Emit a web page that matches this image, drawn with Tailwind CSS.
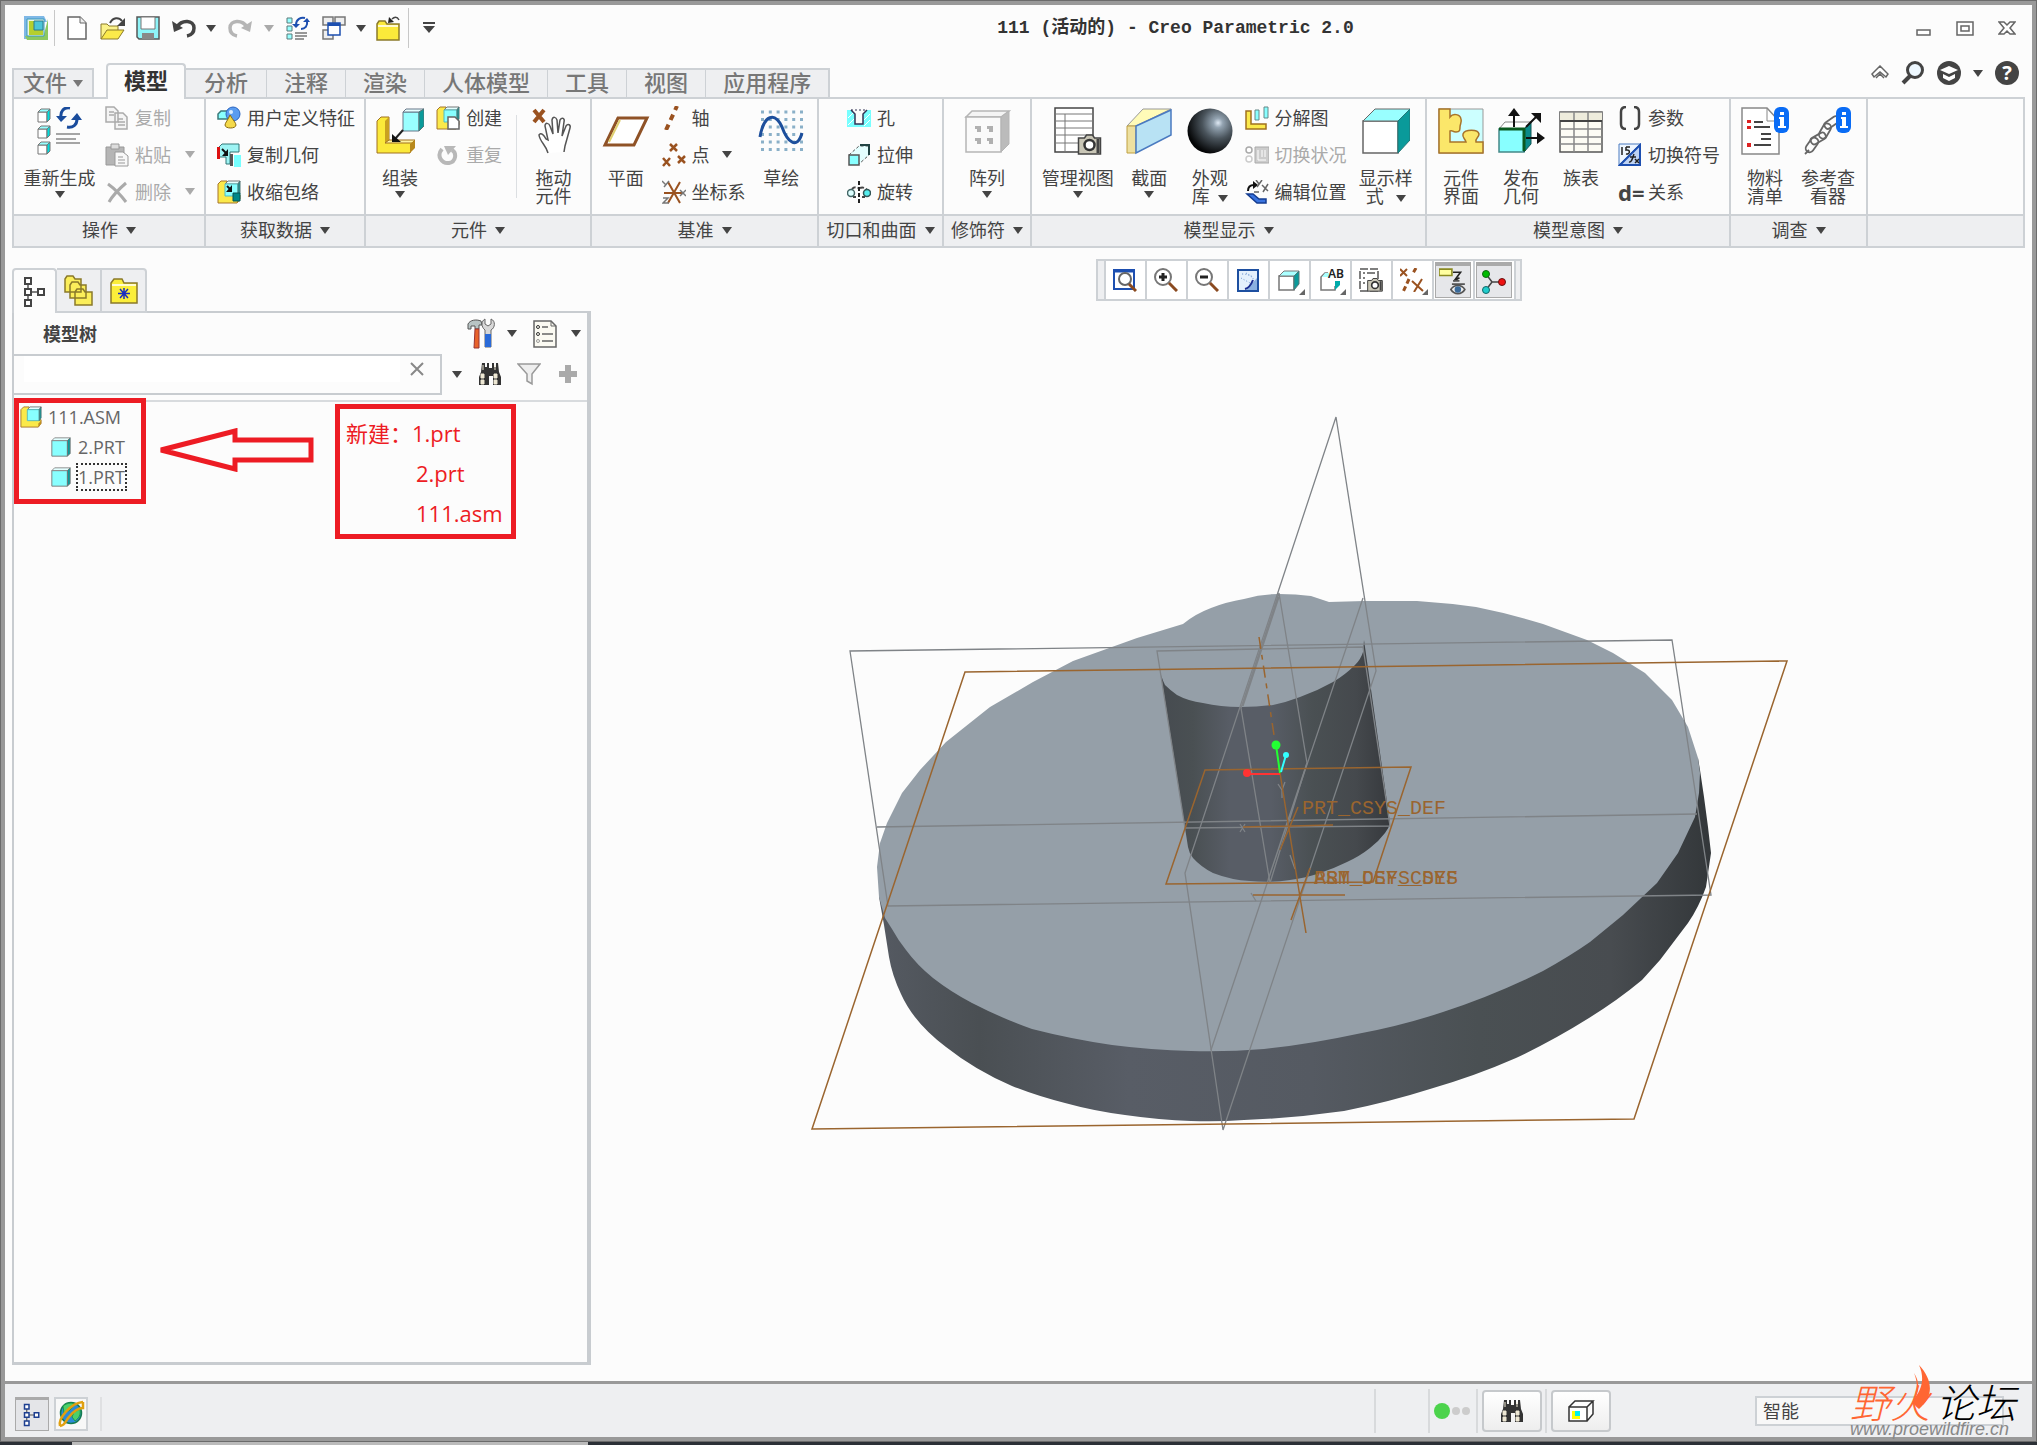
<!DOCTYPE html>
<html lang="zh-CN">

<head>
    <meta charset="UTF-8">
    <meta name="viewport" content="width=device-width, initial-scale=1.0">
    <title>111 (活动的) - Creo Parametric 2.0</title>
    <script src="https://cdn.jsdelivr.net/npm/@tailwindcss/browser@4"></script>
</head>

<body class="bg-[#2b3036] font-['Noto_Sans','Noto_Sans_CJK_SC',sans-serif] text-lg leading-[18px] text-[#444]">

    <!-- shared icon symbols -->
    <svg class="hidden">
        <symbol id="down" viewBox="0 0 10 7"><path d="M0 0h10L5 7z" fill="currentColor" /></symbol>
        <symbol id="cube" viewBox="0 0 24 24">
            <path d="M2 5h17v17H2z" fill="#8ff" stroke="#777" />
            <path d="M2 5l3-3h17l-3 3z" fill="#e4ffff" stroke="#888" />
            <path d="M19 5l3-3v17l-3 3z" fill="#0a9a9a" stroke="#777" />
        </symbol>
        <symbol id="asm" viewBox="0 0 24 24">
            <path d="M1 4l3-3h6v14h13v4l-3 4H1z" fill="#fbe94a" stroke="#a6742a" />
            <path d="M20 19l3-3v3l-3 4z" fill="#c09020" />
            <path d="M8 4l3-3h12l-2 3z" fill="#e4ffff" stroke="#777" />
            <path d="M8 4h13v12H8z" fill="#8ff" stroke="#5bb" />
            <path d="M21 4l2-3v12l-2 3z" fill="#0a9a9a" stroke="#577" />
        </symbol>
        <symbol id="binoculars" viewBox="0 0 24 24">
            <path d="M4 1h3v4h2V1h2v5h3V1h2v4h2V1h2l1 9 2 5v8h-8v-9h-4v9H1v-8l2-5z" fill="#333" />
            <path d="M3 12h3v4H3zM3 18h3v4H3zM16 12h3v4h-3zM16 18h3v4h-3zM5 3v5M17 3v5" fill="#eee8d4" stroke="#eee8d4" />
        </symbol>
        <symbol id="tree" viewBox="0 0 24 32">
            <path d="M5 8v18M5 16h12" fill="none" stroke="#555" stroke-width="1.5" />
            <path d="M2 2h6v6H2zM2 13h6v6H2zM2 24h6v6H2zM15 13h6v6h-6z" fill="#fff" stroke="currentColor" stroke-width="2" />
        </symbol>
        <symbol id="camera" viewBox="0 0 24 22">
            <path d="M1 5h6l2-3h6l2 3h6v16H1z" fill="#c9c6b6" stroke="#444" stroke-width="1.5" />
            <path d="M19 6h3v14h-3z" fill="#444" />
            <circle cx="12" cy="12" r="5" fill="#fff" stroke="#333" stroke-width="2.5" />
        </symbol>
        <symbol id="info" viewBox="0 0 15 26">
            <rect width="15" height="26" rx="6" fill="#0a6cf5" />
            <path d="M6 5h4v3H6zM5 10h5v9h2v2H4v-2h2v-7H5z" fill="#fff" />
        </symbol>
    </svg>

    <div class="flex min-h-[calc(100vh-3px)] flex-col border border-[#6b6b6b]">
        <div class="flex flex-1 flex-col border-4 border-[#999] bg-[#fcfcfc]">

            <!-- title bar -->
            <header class="flex h-[46px] items-center px-4">
                <div class="flex items-center text-[#444]">
                    <svg class="ml-[3px] h-6 w-6" viewBox="0 0 24 24">
                        <path d="M0 0h20l3 6H6v17H0z" fill="#7fb8e6" /><path d="M24 3v21H3l-2-4 19-2z" fill="#8cc860" />
                        <path d="M3 3h17v17H3z" fill="#eaf6e4" stroke="#3a9ac0" />
                        <path d="M5 5h5v9h9v5H5z" fill="#b5cf2e" /><path d="M10 5h9v9h-9z" fill="#4bc5d8" stroke="#2a7a90" />
                    </svg>
                    <i class="ml-1.5 h-9 w-px bg-[#c8c8c8]"></i>
                    <button class="ml-3" aria-label="新建"><svg class="block h-6 w-5" viewBox="0 0 20 24"><path d="M1 1h12l6 6v16H1z" fill="#fff" stroke="#666" stroke-width="1.5" /><path d="M13 1v6h6" fill="#eee" stroke="#666" /></svg></button>
                    <button class="ml-[13px]" aria-label="打开"><svg class="block h-6 w-[26px]" viewBox="0 0 26 24"><path d="M1 23V8h6l2 2h9v4" fill="#fbf28a" stroke="#8a7a2a" /><path d="M1 23l6-9h17l-6 9z" fill="#fbea4a" stroke="#8a7a2a" /><path d="M10 7c3-6 9-6 12-2" fill="none" stroke="#444" stroke-width="2" /><path d="M25 2v8h-8z" fill="#444" /></svg></button>
                    <button class="ml-2.5" aria-label="保存"><svg class="block h-6 w-6" viewBox="0 0 24 24"><path d="M1 1h22v22H3l-2-2z" fill="#8ef4f8" stroke="#555" stroke-width="1.5" /><path d="M5 1h14v12H5z" fill="#fff" stroke="#777" /><path d="M6 17h12v6H6z" fill="#888" /></svg></button>
                    <button class="ml-3" aria-label="撤消"><svg class="block h-5 w-6" viewBox="0 0 24 20"><path d="M5 9c5-8 17-7 17 1 0 4-2 7-7 8" fill="none" stroke="#444" stroke-width="3.5" /><path d="M0 3l2 11 9-4z" fill="#444" /></svg></button>
                    <svg class="ml-[10px] h-[7px] w-[10px]"><use href="#down" /></svg>
                    <button class="ml-3" aria-label="重做"><svg class="block h-5 w-6" viewBox="0 0 24 20"><path d="M19 9C14 1 2 2 2 10c0 4 2 7 7 8" fill="none" stroke="#b5b5b5" stroke-width="3.5" /><path d="M24 3l-2 11-9-4z" fill="#b5b5b5" /></svg></button>
                    <svg class="ml-3 h-[7px] w-[10px] text-[#aaa]"><use href="#down" /></svg>
                    <button class="ml-3" aria-label="重新生成"><svg class="block h-6 w-6" viewBox="0 0 24 24"><path d="M1 2h5v5H1zM1 10h5v5H1zM1 18h5v5H1z" fill="#9ff" stroke="#5a7a7a" /><path d="M9 17h12M9 20h12M9 23h9" stroke="#777" stroke-width="1.5" /><path d="M10 9c0-6 5-8 9-7M21 5c1 5-2 8-6 8" fill="none" stroke="#1d4fb0" stroke-width="2" /><path d="M6 8h8l-4 4zM17 6h7l-3-4z" fill="#1d4fb0" /></svg></button>
                    <button class="ml-3" aria-label="窗口"><svg class="block h-6 w-6" viewBox="0 0 24 24"><path d="M1 1h10v8H1zM13 1h10v8H13zM1 14h10v9H1z" fill="#eee" stroke="#777" stroke-width="1.5" /><path d="M6 7h12v12H6z" fill="#fff" stroke="#1d4fb0" stroke-width="1.5" /><path d="M6 7h12v3H6z" fill="#1d4fb0" /></svg></button>
                    <svg class="ml-2.5 h-[7px] w-[10px]"><use href="#down" /></svg>
                    <button class="ml-2.5" aria-label="关闭"><svg class="block h-[26px] w-6" viewBox="0 0 24 26"><path d="M1 9l2-3h6l2 3h12v16H1z" fill="#fbea3a" stroke="#8a7a2a" stroke-width="1.5" /><path d="M2 11h20" stroke="#fffad0" stroke-width="2" /><path d="M23 5c-2-4-5-3-7-1" fill="none" stroke="#444" stroke-width="1.5" /><path d="M12 8l1-6 5 5z" fill="#222" /></svg></button>
                    <i class="ml-2 h-10 w-px bg-[#c8c8c8]"></i>
                    <svg class="ml-3.5 h-3 w-3" viewBox="0 0 12 12"><path d="M0 1h12" stroke="#444" stroke-width="2" /><path d="M0 4h12l-6 7z" fill="#444" /></svg>
                </div>
                <h1 class="flex-1 text-center font-['Liberation_Mono','Noto_Sans_CJK_SC',monospace] text-lg leading-6 font-bold text-[#333]">111 (活动的) - Creo Parametric 2.0</h1>
                <div class="flex items-center gap-6">
                    <button aria-label="最小化"><svg class="block h-4 w-4" viewBox="0 0 16 16"><path d="M1 10h13v5H1z" fill="#fff" stroke="#666" stroke-width="1.5" /></svg></button>
                    <button aria-label="还原"><svg class="block h-4 w-[18px]" viewBox="0 0 18 16"><path d="M1 2h16v13H1zM5 6h8v5H5z" fill="#fff" stroke="#666" stroke-width="1.5" /></svg></button>
                    <button aria-label="关闭窗口"><svg class="block h-4 w-[18px]" viewBox="0 0 18 16"><path d="M1 2h5l3 3 3-3h5l-5 6 5 6h-5l-3-3-3 3H1l5-6z" fill="#fff" stroke="#666" stroke-width="1.5" /></svg></button>
                </div>
            </header>

            <!-- ribbon tabs -->
            <nav class="flex h-[46px] items-end px-[7px] text-[22px] leading-6 font-medium text-[#777]">
                <button class="flex h-[29px] items-center gap-1.5 border-2 border-b-0 border-[#cdd1d5] bg-[#eeeff1] px-[9px] pb-1">文件<svg class="mt-1 h-[7px] w-[10px]"><use href="#down" /></svg></button>
                <button class="z-10 -mb-0.5 ml-3 h-9 rounded-t-sm border-2 border-b-0 border-[#cdd1d5] bg-[#fcfcfc] px-4 pb-1 font-bold text-[#333]">模型</button>
                <div class="flex h-[29px] border-t-2 border-r-2 border-[#cdd1d5] bg-[#eeeff1]">
                    <button class="px-[18px] pb-1">分析</button>
                    <button class="border-l border-[#cdd1d5] px-[17px] pb-1">注释</button>
                    <button class="border-l border-[#cdd1d5] px-[17px] pb-1">渲染</button>
                    <button class="border-l border-[#cdd1d5] px-[17px] pb-1">人体模型</button>
                    <button class="border-l border-[#cdd1d5] px-[17px] pb-1">工具</button>
                    <button class="border-l border-[#cdd1d5] px-[17px] pb-1">视图</button>
                    <button class="border-l border-[#cdd1d5] px-[17px] pb-1">应用程序</button>
                </div>
                <div class="mb-3 ml-auto flex items-center gap-3 pr-1.5">
                    <button aria-label="折叠功能区"><svg class="block h-4 w-[18px]" viewBox="0 0 18 16"><path d="M1 9l8-8 8 8-2 3-6-5-6 5zM5 13l4-4 4 4" fill="#fff" stroke="#666" stroke-width="1.500" /></svg></button>
                    <button aria-label="搜索"><svg class="block h-6 w-6" viewBox="0 0 24 24"><circle cx="14" cy="9" r="7.5" fill="#eef8ff" stroke="#444" stroke-width="3" /><path d="M9 15l-7 7" stroke="#444" stroke-width="4" /></svg></button>
                    <button aria-label="学习"><svg class="block h-6 w-6" viewBox="0 0 24 24"><circle cx="12" cy="12" r="12" fill="#444" /><path d="M3 9l9-4 9 4-9 4zM6 13l6 3 6-3v4l-6 3-6-3z" fill="#fff" /></svg></button>
                    <svg class="h-[7px] w-[10px] text-[#444]"><use href="#down" /></svg>
                    <button aria-label="帮助" class="h-6 w-6 rounded-full bg-[#444] font-['Noto_Sans'] text-xl leading-6 font-bold text-white">?</button>
                </div>
            </nav>

            <!-- ribbon -->
            <section class="mx-[7px] flex h-[151px] border-2 border-[#cdd1d5] whitespace-nowrap">
                <div class="flex w-[192px] shrink-0 flex-col border-r-2 border-[#cdd1d5]">
                    <div class="flex flex-1">
                        <button class="flex w-[91px] flex-col items-center pt-2">
                            <svg class="h-12 w-12" viewBox="0 0 48 48">
                                <g fill="#fff" stroke="#777"><path d="M2 5h9v10H2zM2 22h9v9H2zM2 38h9v9H2z" /><path d="M11 5l3-3v10l-3 3zM11 22l3-3v9l-3 3zM11 38l3-3v9l-3 3z" fill="#0dd" /><path d="M2 5l3-3h9l-3 3zM2 22l3-3h9l-3 3zM2 38l3-3h9l-3 3z" fill="#9ff" /></g>
                                <path d="M20 27h24M20 32h20M20 36h24" stroke="#888" stroke-width="1.5" />
                                <path d="M34 1c-6-1-10 3-9 10M31 20c6 1 10-2 10-8" fill="none" stroke="#1a4c9c" stroke-width="3" /><path d="M20 9h11l-6 6zM35 13h11l-5-7z" fill="#1a4c9c" />
                            </svg>
                            <span class="mt-3.5">重新生成</span><svg class="mt-1 h-[7px] w-[10px]"><use href="#down" /></svg>
                        </button>
                        <div class="flex flex-col text-[#aaa]">
                            <button class="flex h-[37px] items-center gap-1.5"><svg class="h-6 w-6" viewBox="0 0 24 24" fill="#f4f4f4" stroke="#aaa" stroke-width="1.5"><path d="M1 1h8l4 4v11H1zM10 7h8l4 4v12H10z" /><path d="M4 6h5M4 9h5M13 13h5M13 16h7M13 19h7" /></svg>复制</button>
                            <button class="flex h-[37px] items-center gap-1.5"><svg class="h-6 w-6" viewBox="0 0 24 24" stroke="#999"><path d="M1 4h18v18H1z" fill="#b5b5b5" /><path d="M6 1h8v5H6z" fill="#ddd" /><path d="M10 9h8l5 4v10H10z" fill="#f8f8f8" /><path d="M13 14h5M13 17h7M13 20h7" /></svg>粘贴<svg class="ml-2 h-[7px] w-[10px]"><use href="#down" /></svg></button>
                            <button class="flex h-[37px] items-center gap-1.5"><svg class="h-6 w-6" viewBox="0 0 24 24"><path d="M3 4c7 5 12 10 18 18M21 3C14 9 8 15 4 22" fill="none" stroke="#aaa" stroke-width="3" /></svg>删除<svg class="ml-2 h-[7px] w-[10px]"><use href="#down" /></svg></button>
                        </div>
                    </div>
                    <button class="flex h-8 items-center justify-center gap-2 border-t-2 border-[#cdd1d5] bg-[#eeeff1] pb-0.5">操作<svg class="h-[7px] w-[10px]"><use href="#down" /></svg></button>
                </div>

                <div class="flex w-[160px] shrink-0 flex-col border-r-2 border-[#cdd1d5]">
                    <div class="flex flex-1 flex-col pl-[11px]">
                        <button class="flex h-[37px] items-center gap-1.5"><svg class="h-6 w-6" viewBox="0 0 24 24"><path d="M1 13V8l3-3h9v8z" fill="#8ff" stroke="#3a7a7a" stroke-width="1.5" /><circle cx="16" cy="8" r="7" fill="#5a9cf0" stroke="#2a64c0" /><circle cx="14" cy="6" r="2" fill="#d8ecff" /><path d="M13 9c3 5 6 8 6 10 0 4-11 4-11 0 0-2 3-5 5-10z" fill="#f4d94a" stroke="#8a6a10" /></svg>用户定义特征</button>
                        <button class="flex h-[37px] items-center gap-1.5"><svg class="h-6 w-6" viewBox="0 0 24 24"><path d="M2 4l3-3h17v8h-9v12H9v-7H2z" fill="#9ef4f4" stroke="#377" /><path d="M0 4h3v12H0z" fill="#d11" /><path d="M17 12h7v12h-7z" fill="#7ff" /><path d="M13 11h3v12h-3z" fill="#555" /><path d="M5 6l5 5" stroke="#111" stroke-width="2" /><path d="M11 6v7H5z" fill="#111" /></svg>复制几何</button>
                        <button class="flex h-[37px] items-center gap-1.5"><svg class="h-6 w-6" viewBox="0 0 24 24"><use href="#asm" /><path d="M16 13h7v8h-7z" fill="#088" stroke="#055" /><path d="M10 6l4 4" stroke="#111" stroke-width="2" /><path d="M15 5v7H9z" fill="#111" /></svg>收缩包络</button>
                    </div>
                    <button class="flex h-8 items-center justify-center gap-2 border-t-2 border-[#cdd1d5] bg-[#eeeff1] pb-0.5">获取数据<svg class="h-[7px] w-[10px]"><use href="#down" /></svg></button>
                </div>

                <div class="flex w-[226px] shrink-0 flex-col border-r-2 border-[#cdd1d5]">
                    <div class="flex flex-1">
                        <button class="flex w-[71px] flex-col items-center pt-2">
                            <svg class="h-12 w-12" viewBox="0 0 48 48">
                                <path d="M1 14l4-4h8v24h25l-4 12H1z" fill="#fbe93a" stroke="#a07020" /><path d="M9 14l4-4v24l-4 2z" fill="#c9a020" /><path d="M9 36l4-3h26l-3 3z" fill="#fff4a0" stroke="#a07020" /><path d="M34 37l5-4v8l-5 5z" fill="#b8891c" />
                                <path d="M27 5h16v19H27z" fill="#9ff" stroke="#678" /><path d="M27 5l3-3h18l-5 3z" fill="#e8ffff" stroke="#678" /><path d="M43 5l5-3v17l-5 5z" fill="#0a9a9a" stroke="#577" />
                                <path d="M27 23l-8 9" stroke="#222" stroke-width="2" /><path d="M16 27v8h9z" fill="#111" />
                            </svg>
                            <span class="mt-3.5">组装</span><svg class="mt-1 h-[7px] w-[10px]"><use href="#down" /></svg>
                        </button>
                        <div class="ml-0.5 flex flex-col">
                            <button class="flex h-[37px] items-center gap-1.5"><svg class="h-6 w-6" viewBox="0 0 24 24"><use href="#asm" /><path d="M12 11h7l4 4v8H12z" fill="#fff" stroke="#666" stroke-width="1.5" /></svg>创建</button>
                            <button class="flex h-[37px] items-center gap-1.5 text-[#aaa]"><svg class="h-6 w-6" viewBox="0 0 24 24"><path d="M6 6c-6 7 0 15 7 14 7-1 8-10 3-13" fill="none" stroke="#b8b8b8" stroke-width="4" /><path d="M8 3h12l-8 9z" fill="#b8b8b8" /></svg>重复</button>
                        </div>
                        <i class="my-4 ml-3.5 w-px bg-[#dcdfe2]"></i>
                        <button class="flex w-[76px] flex-col items-center pt-2">
                            <svg class="h-12 w-12" viewBox="0 0 48 48">
                                <path d="M4 3l10 12M14 3L4 15" stroke="#9a5220" stroke-width="4" />
                                <path d="M18 46c-2-8-8-11-9-18 2-3 5 0 7 4l2 1-3-14c0-4 4-3 5 0l3 8-1-14c1-4 4-3 5 0l1 13 2-13c2-3 5-2 4 2l-2 14 4-10c2-3 5-1 4 2l-5 18-1 6" fill="#fff" stroke="#555" stroke-width="1.5" />
                            </svg>
                            <span class="mt-3.5">拖动<br>元件</span>
                        </button>
                    </div>
                    <button class="flex h-8 items-center justify-center gap-2 border-t-2 border-[#cdd1d5] bg-[#eeeff1] pb-0.5">元件<svg class="h-[7px] w-[10px]"><use href="#down" /></svg></button>
                </div>

                <div class="flex w-[227px] shrink-0 flex-col border-r-2 border-[#cdd1d5]">
                    <div class="flex flex-1">
                        <button class="flex w-[68px] flex-col items-center pt-2">
                            <svg class="h-12 w-12" viewBox="0 0 48 48"><path d="M16 11h29L32 38H3z" fill="#fff" stroke="#8f5226" stroke-width="3" /><path d="M18 13L7 35" stroke="#e0d070" stroke-width="2" /></svg>
                            <span class="mt-3.5">平面</span>
                        </button>
                        <div class="flex flex-col pl-0.5">
                            <button class="flex h-[37px] items-center gap-1.5"><svg class="h-6 w-6" viewBox="0 0 24 24"><path d="M4 24l11-24" stroke="#9a5220" stroke-width="4" stroke-dasharray="6 5" /></svg>轴</button>
                            <button class="flex h-[37px] items-center gap-1.5"><svg class="h-6 w-6" viewBox="0 0 24 24"><path d="M8 1l7 7M15 1L8 8M1 15l7 8M8 15l-7 8M16 13l7 7M23 13l-7 7" stroke="#9a5220" stroke-width="2.5" /></svg>点<svg class="ml-1.5 h-[7px] w-[10px]"><use href="#down" /></svg></button>
                            <button class="flex h-[37px] items-center gap-1.5"><svg class="h-6 w-6" viewBox="0 0 24 24"><path d="M2 13h18M6 2l12 21M18 2L6 23" stroke="#9a5220" stroke-width="2" /><path d="M0 1l4 4M7 1L2 7M18 10l6 6M24 10l-6 6M1 18h5l-5 5h6" fill="none" stroke="#777" stroke-width="1.5" /></svg>坐标系</button>
                        </div>
                        <button class="flex w-[72px] flex-col items-center pt-2">
                            <svg class="h-12 w-12" viewBox="0 0 48 48">
                                <path d="M4 5h44M4 12.5h44M4 20h44M4 27.500h44M4 35h44M4 42.500h44" stroke="#8ab0c8" stroke-width="3" stroke-dasharray="3 4.800" />
                                <path d="M3 30C7 7 18 5 25 20c5 14 15 24 20 6" fill="none" stroke="#1d4f9c" stroke-width="3" />
                            </svg>
                            <span class="mt-3.5">草绘</span>
                        </button>
                    </div>
                    <button class="flex h-8 items-center justify-center gap-2 border-t-2 border-[#cdd1d5] bg-[#eeeff1] pb-0.5">基准<svg class="h-[7px] w-[10px]"><use href="#down" /></svg></button>
                </div>

                <div class="flex w-[125px] shrink-0 flex-col border-r-2 border-[#cdd1d5]">
                    <div class="flex flex-1 flex-col pl-7">
                        <button class="flex h-[37px] items-center gap-1.5"><svg class="h-6 w-6" viewBox="0 0 24 24"><path d="M0 4h4l4 4v10h8V8l4-4h4v17H0z" fill="#7ff" /><path d="M1 12l5-5M1 19l6-6M17 20l6-6M17 14l6-6" stroke="#fff" /><path d="M4 4l4 4v10h8V8l4-4" fill="none" stroke="#335" stroke-width="1.500" /><path d="M4 4h16" stroke="#335" stroke-dasharray="2 2" /></svg>孔</button>
                        <button class="flex h-[37px] items-center gap-1.5"><svg class="h-6 w-6" viewBox="0 0 24 24"><path d="M2 12L12 3h10v9l-10 9" fill="#e4ffff" stroke="#555" stroke-dasharray="3 2" /><path d="M2 12h10v10H2z" fill="#8ff" stroke="#555" stroke-width="1.500" /><path d="M13 2h9v10" fill="none" stroke="#244" stroke-width="2" /></svg>拉伸</button>
                        <button class="flex h-[37px] items-center gap-1.5"><svg class="h-6 w-6" viewBox="0 0 24 24"><path d="M5 9c2-2 4-2 6-1M13 8c3-1 5 0 7 2M6 17h3M15 17h3" fill="none" stroke="#444" stroke-width="2" stroke-dasharray="4 2" /><circle cx="4" cy="13" r="3.500" fill="#dff" stroke="#466" stroke-width="1.500" /><circle cx="20" cy="13" r="3.500" fill="#5ee" stroke="#355" stroke-width="1.500" /><path d="M12 1v22" stroke="#222" stroke-width="2" stroke-dasharray="4 2" /></svg>旋转</button>
                    </div>
                    <button class="flex h-8 items-center justify-center gap-2 border-t-2 border-[#cdd1d5] bg-[#eeeff1] pb-0.5">切口和曲面<svg class="h-[7px] w-[10px]"><use href="#down" /></svg></button>
                </div>

                <div class="flex w-[88px] shrink-0 flex-col border-r-2 border-[#cdd1d5]">
                    <button class="flex flex-1 flex-col items-center pt-2">
                        <svg class="h-12 w-12" viewBox="0 0 48 48">
                            <path d="M3 10l6-6h37l-8 6z" fill="#f4f4f4" stroke="#b5b5b5" stroke-width="1.500" /><path d="M38 10l8-6v33l-8 8z" fill="#bbb" stroke="#b5b5b5" /><path d="M3 10h35v35H3z" fill="#fafafa" stroke="#b5b5b5" stroke-width="1.500" />
                            <path d="M12 19h6v6h-4v-3h-2zM24 19h6v6h-4v-3h-2zM12 31h6v6h-4v-3h-2zM24 31h6v6h-4v-3h-2z" fill="#b0b0b0" />
                        </svg>
                        <span class="mt-3.5">阵列</span><svg class="mt-1 h-[7px] w-[10px]"><use href="#down" /></svg>
                    </button>
                    <button class="flex h-8 items-center justify-center gap-2 border-t-2 border-[#cdd1d5] bg-[#eeeff1] pb-0.5">修饰符<svg class="h-[7px] w-[10px]"><use href="#down" /></svg></button>
                </div>

                <div class="flex w-[395px] shrink-0 flex-col border-r-2 border-[#cdd1d5]">
                    <div class="flex flex-1">
                        <button class="flex w-[92px] flex-col items-center pt-2">
                            <svg class="h-12 w-12" viewBox="0 0 48 48"><path d="M1 1h38v44H1z" fill="#fff" stroke="#444" stroke-width="1.500" /><path d="M1 7h38M1 14h38M1 21h38M1 28h38M1 36h38M11 7v38" stroke="#777" /><svg x="23" y="26" width="25" height="22"><use href="#camera" /></svg></svg>
                            <span class="mt-3.5">管理视图</span><svg class="mt-1 h-[7px] w-[10px]"><use href="#down" /></svg>
                        </button>
                        <button class="flex w-[52px] flex-col items-center pt-2">
                            <svg class="h-12 w-12" viewBox="0 0 48 48"><path d="M2 19L18 2h28L11 19z" fill="#fffbb8" stroke="#999" /><path d="M2 19h9v27H2z" fill="#ede0a0" stroke="#c0a040" /><path d="M11 19L46 3v25L11 46z" fill="#b8e2f4" stroke="#4a7ac0" stroke-width="1.500" /></svg>
                            <span class="mt-3.5">截面</span><svg class="mt-1 h-[7px] w-[10px]"><use href="#down" /></svg>
                        </button>
                        <button class="flex w-[70px] flex-col items-center pt-2">
                            <svg class="h-12 w-12" viewBox="0 0 48 48"><defs><radialGradient id="ball" cx=".68" cy=".32" r=".7"><stop offset="0" stop-color="#dfe9f4" /><stop offset=".15" stop-color="#93a3b1" /><stop offset=".5" stop-color="#4a545c" /><stop offset="1" stop-color="#050607" /></radialGradient></defs><circle cx="24" cy="24" r="22.500" fill="url(#ball)" /></svg>
                            <span class="mt-3.5">外观<br>库<svg class="ml-2 inline h-[7px] w-[10px]"><use href="#down" /></svg></span>
                        </button>
                        <div class="flex flex-col">
                            <button class="flex h-[37px] items-center gap-1.5"><svg class="h-6 w-6" viewBox="0 0 24 24"><path d="M1 5h5v13h15v5H1z" fill="#fbe94a" stroke="#a07020" stroke-width="1.500" /><path d="M10 4h4v10h-4zM19 1h4v11h-4z" fill="#8ff" stroke="#688" /></svg>分解图</button>
                            <button class="flex h-[37px] items-center gap-1.5 text-[#aaa]"><svg class="h-6 w-6" viewBox="0 0 24 24"><circle cx="4" cy="7" r="3" fill="#fff" stroke="#aaa" stroke-width="1.500" /><circle cx="4" cy="16" r="3" fill="#fff" stroke="#ccc" stroke-width="1.500" /><path d="M10 4h14v16H10z" fill="#ccc" stroke="#aaa" /><path d="M13 7v10h8M17 7v7M20 7v7" stroke="#fff" fill="none" /></svg>切换状况</button>
                            <button class="flex h-[37px] items-center gap-1.5"><svg class="h-6 w-6" viewBox="0 0 24 24"><path d="M3 11c0-5 3-6 6-6" fill="none" stroke="#111" stroke-width="2" /><path d="M8 1l5 4-5 4z" fill="#111" /><path d="M11 0l3 4M17 0l-5 7M17 5l6 6M23 4l-5 8M9 12h5" stroke="#666" stroke-width="1.500" /><path d="M2 14h6l6 5h7v4H12z" fill="#3a74e0" stroke="#143c90" stroke-width="1.500" /></svg>编辑位置</button>
                        </div>
                        <button class="flex w-[79px] flex-col items-center pt-2">
                            <svg class="h-12 w-12" viewBox="0 0 48 48"><path d="M1 14h35v32H1z" fill="#fff" stroke="#666" stroke-width="1.500" /><path d="M1 14L13 2h35L36 14z" fill="#9ff" stroke="#666" /><path d="M36 14L48 2v31L36 46z" fill="#0a9a9a" stroke="#277" /></svg>
                            <span class="mt-3.5">显示样<br>式<svg class="ml-3 inline h-[7px] w-[10px]"><use href="#down" /></svg></span>
                        </button>
                    </div>
                    <button class="flex h-8 items-center justify-center gap-2 border-t-2 border-[#cdd1d5] bg-[#eeeff1] pb-0.5">模型显示<svg class="h-[7px] w-[10px]"><use href="#down" /></svg></button>
                </div>

                <div class="flex w-[304px] shrink-0 flex-col border-r-2 border-[#cdd1d5]">
                    <div class="flex flex-1">
                        <button class="flex w-[68px] flex-col items-center pt-2">
                            <svg class="h-12 w-12" viewBox="0 0 48 48"><path d="M2 2h44v44H2z" fill="#cff" stroke="#999" /><path d="M2 2h11v8c3-4 10-3 11 2 1 3-1 5-1 8s0 5-4 5-3-2-6-1v11h16c-1-4-4-4-3-8 2-5 15-5 16 0 0 4-4 4-3 8h7v11H2z" fill="#fbe76a" stroke="#a8742a" stroke-width="1.500" /></svg>
                            <span class="mt-3.5">元件<br>界面</span>
                        </button>
                        <button class="flex w-[52px] flex-col items-center pt-2">
                            <svg class="h-12 w-12" viewBox="0 0 48 48"><path d="M2 22h25v23H2z" fill="#8ff" stroke="#488" stroke-width="1.500" /><path d="M2 22l6-7h26l-6 7z" fill="#fff" stroke="#888" /><path d="M27 22l7-7v22l-7 8z" fill="#0a8a8a" stroke="#155" /><path d="M2 22h25v22" fill="none" stroke="#0a5a20" stroke-width="3" /><path d="M17 20V6M29 20L41 8M29 31h13" stroke="#111" stroke-width="2" /><path d="M17 1l6 8H11zM34 6h10v10zM48 31l-8-6v12z" fill="#111" /></svg>
                            <span class="mt-3.5">发布<br>几何</span>
                        </button>
                        <button class="flex w-[68px] flex-col items-center pt-2">
                            <svg class="h-12 w-12" viewBox="0 0 48 48"><path d="M3 5h42v40H3z" fill="#fdfcf4" stroke="#555" stroke-width="1.500" /><path d="M3 5h42v9H3z" fill="#eeecdc" /><path d="M3 5h42M3 22h42M3 30h42M3 37h42M17 5v40M31 5v40" stroke="#888" stroke-width="1.500" /><path d="M3 14h42" stroke="#444" stroke-width="2" /></svg>
                            <span class="mt-3.5">族表</span>
                        </button>
                        <div class="flex flex-col pl-[3px]">
                            <button class="flex h-[37px] items-center gap-1.5"><svg class="h-6 w-6" viewBox="0 0 24 24"><path d="M8 1C4 1 3 3 3 6v12c0 3 1 5 5 5M16 1c4 0 5 2 5 5v12c0 3-1 5-5 5" fill="none" stroke="#444" stroke-width="2.500" /></svg>参数</button>
                            <button class="flex h-[37px] items-center gap-1.5"><svg class="h-6 w-6" viewBox="0 0 24 24"><path d="M1 1h21L1 22z" fill="#eef6ff" stroke="#4a7ac0" /><path d="M22 2v20H2z" fill="#c0d4f4" stroke="#1d4fb0" stroke-width="2" /><path d="M4 4v8M8 4h4M8 4v3c5-1 4 5 0 4M11 19c3 1 4-6 5-8M12 14h6M17 16l4 4M21 16l-4 4" fill="none" stroke="#222" stroke-width="1.500" /></svg>切换符号</button>
                            <button class="flex h-[37px] items-center gap-1.5"><b class="w-6 text-[22px] text-[#444]">d=</b>关系</button>
                        </div>
                    </div>
                    <button class="flex h-8 items-center justify-center gap-2 border-t-2 border-[#cdd1d5] bg-[#eeeff1] pb-0.5">模型意图<svg class="h-[7px] w-[10px]"><use href="#down" /></svg></button>
                </div>

                <div class="flex w-[137px] shrink-0 flex-col border-r-2 border-[#cdd1d5]">
                    <div class="flex flex-1">
                        <button class="flex w-[68px] flex-col items-center pt-2">
                            <svg class="h-12 w-12" viewBox="0 0 48 48"><path d="M1 1h25l12 13v33H1z" fill="#fff" stroke="#888" stroke-width="1.500" /><path d="M26 1v13h12" fill="none" stroke="#888" /><path d="M13 15h9M13 20h16M20 27h10M20 32h10M13 38h17" stroke="#444" stroke-width="2" /><path d="M6 13h4v3H6zM6 19h4v3H6zM6 36h4v4H6z" fill="#d22" /><svg x="33" y="0" width="15" height="26"><use href="#info" /></svg></svg>
                            <span class="mt-3.5">物料<br>清单</span>
                        </button>
                        <button class="flex w-[58px] flex-col items-center pt-2">
                            <svg class="h-12 w-12" viewBox="0 0 48 48"><g fill="none" stroke="#666" stroke-width="1.800"><rect x="0" y="34" width="16" height="8" rx="4" transform="rotate(-55 8 38)" /><rect x="6" y="28" width="16" height="7" rx="3" transform="rotate(-30 14 31)" /><rect x="13" y="20" width="16" height="8" rx="4" transform="rotate(-60 21 24)" /><rect x="20" y="12" width="16" height="7" rx="3" transform="rotate(-35 28 16)" /><path d="M1 47l4-4" /></g><svg x="32" y="0" width="15" height="26"><use href="#info" /></svg></svg>
                            <span class="mt-3.5">参考查<br>看器</span>
                        </button>
                    </div>
                    <button class="flex h-8 items-center justify-center gap-2 border-t-2 border-[#cdd1d5] bg-[#eeeff1] pb-0.5">调查<svg class="h-[7px] w-[10px]"><use href="#down" /></svg></button>
                </div>
                <div class="flex flex-1 flex-col justify-end"><div class="h-8 border-t-2 border-[#cdd1d5] bg-[#eeeff1]"></div></div>
            </section>

            <main class="flex flex-1">
                <!-- model tree -->
                <aside class="relative ml-[7px] flex w-[579px] shrink-0 flex-col pt-5 pb-4">
                    <div class="z-10 -mb-0.5 flex h-[45px]">
                        <button class="grid w-[45px] place-items-center rounded-t border-2 border-b-0 border-[#cdd1d5] bg-[#fcfcfc] text-[#444]" aria-label="模型树"><svg class="h-8 w-6"><use href="#tree" /></svg></button>
                        <button class="grid w-[45px] place-items-center border-y-2 border-r-2 border-[#cdd1d5] bg-[#eeeff1]" aria-label="文件夹浏览器"><svg class="h-8 w-8" viewBox="0 0 32 32" fill="#fbee5a" stroke="#8a7a2a" stroke-width="1.500"><path d="M2 4l2-3h6l2 3h6v13H2zM7 10l2-3h6l2 3h6v13H7zM12 17l2-3h6l2 3h7v13H12z" /></svg></button>
                        <button class="grid w-[45px] place-items-center rounded-tr border-y-2 border-r-2 border-[#cdd1d5] bg-[#eeeff1]" aria-label="收藏夹"><svg class="h-7 w-7" viewBox="0 0 28 28"><path d="M1 6l3-4h8l2 4h13v20H1z" fill="#fbee3a" stroke="#8a7a2a" stroke-width="1.500" /><path d="M2 8h24" stroke="#fffbd0" stroke-width="2" /><path d="M14 11v11M8 16.500h12M10 12l8 9M18 12l-8 9" stroke="#1a2cc0" stroke-width="1.500" /></svg></button>
                    </div>
                    <div class="flex flex-1 flex-col border-2 border-r-4 border-b-[3px] border-[#c8ccd0]">
                        <div class="flex h-[41px] items-center pr-1.5 pl-[29px]">
                            <h2 class="text-lg leading-6 font-bold">模型树</h2>
                            <button class="ml-auto" aria-label="设置"><svg class="block h-8 w-7" viewBox="0 0 28 32"><path d="M1 6c2-4 8-5 13-3l1 4h-3v4H8V8H4v3H1z" fill="#b8c4c4" stroke="#555" /><path d="M8 11h4v19H7z" fill="#e8622a" stroke="#933" /><path d="M18 1v5l3 2 3-2V1c5 2 4 9 0 11v17h-6V12c-4-3-4-9 0-11z" fill="#d8d8d8" stroke="#666" /><path d="M18 16h6v13h-6z" fill="#2a6ad8" /></svg></button>
                            <svg class="ml-3 h-[7px] w-[10px]"><use href="#down" /></svg>
                            <button class="ml-4" aria-label="显示"><svg class="block h-7 w-6" viewBox="0 0 24 28"><path d="M1 1h17l5 5v21H1z" fill="#fbfaf2" stroke="#666" stroke-width="1.500" /><path d="M18 1v5h5" fill="none" stroke="#666" /><path d="M9 7h6M9 14h11M9 21h11" stroke="#666" stroke-width="1.500" /><circle cx="5" cy="7" r="1.500" fill="none" stroke="#333" /><circle cx="5" cy="14" r="1.500" fill="none" stroke="#333" /><circle cx="5" cy="21" r="1.500" fill="none" stroke="#999" /></svg></button>
                            <svg class="ml-3.5 h-[7px] w-[10px]"><use href="#down" /></svg>
                        </div>
                        <div class="flex h-12 items-start border-b-2 border-[#d8dbde]">
                            <div class="flex h-[41px] flex-1 items-start border-2 border-l-0 border-[#c8ccd0]">
                                <input type="text" aria-label="搜索模型树" class="ml-2.5 h-[26px] min-w-0 flex-1 bg-white px-1 outline-none">
                                <button class="mr-4 ml-2.5 mt-1.5" aria-label="清除"><svg class="block h-[14px] w-[14px]" viewBox="0 0 14 14"><path d="M1 1l12 12M13 1L1 13" stroke="#888" stroke-width="2" /></svg></button>
                            </div>
                            <div class="flex h-10 w-[145px] items-center pr-2.5 pl-2.5">
                                <svg class="h-[7px] w-[10px]"><use href="#down" /></svg>
                                <button class="ml-4" aria-label="查找"><svg class="block h-6 w-6"><use href="#binoculars" /></svg></button>
                                <button class="ml-[15px]" aria-label="过滤"><svg class="block h-6 w-6" viewBox="0 0 24 24"><path d="M1 2h22l-8 10v10l-5-3v-7z" fill="#eee" stroke="#999" stroke-width="1.500" /></svg></button>
                                <button class="ml-auto" aria-label="添加"><svg class="block h-[18px] w-[18px]" viewBox="0 0 18 18"><path d="M6 0h6v6h6v6h-6v6H6v-6H0V6h6z" fill="#aaa" /></svg></button>
                            </div>
                        </div>
                        <ul class="font-['Open_Sans'] leading-[30px] text-[#666]">
                            <li class="flex h-[30px] items-center gap-1.5 pl-1.5"><svg class="h-[22px] w-[22px]"><use href="#asm" /></svg>111.ASM</li>
                            <li class="flex h-[30px] items-center pl-9"><svg class="h-[22px] w-[22px]"><use href="#cube" /></svg><span class="ml-1 px-0.5">2.PRT</span></li>
                            <li class="flex h-[30px] items-center pl-9"><svg class="h-[22px] w-[22px]"><use href="#cube" /></svg><span class="ml-1 border-2 border-dotted border-[#333] leading-6">1.PRT</span></li>
                        </ul>
                    </div>
                    <!-- red callouts over the tree -->
                    <div class="absolute top-[150px] left-0.5 h-[106px] w-[132px] border-5 border-[#ed1c24]"></div>
                    <svg class="absolute top-[180px] left-[146px] h-11 w-[158px]" viewBox="0 0 158 44"><path d="M3 22L77 3v9h76v20H77v9z" fill="none" stroke="#ed1c24" stroke-width="5" /></svg>
                    <div class="absolute top-[156px] left-[323px] grid h-[135px] w-[181px] grid-cols-[auto_1fr] grid-rows-[40px_40px_40px] items-center border-5 border-[#ed1c24] pt-1 pl-1.5 font-['Open_Sans','Noto_Sans_CJK_SC',sans-serif] text-[22px] text-[#ed1c24]">
                        <span>新建：</span><span>1.prt</span>
                        <span class="col-start-2 pl-1">2.prt</span>
                        <span class="col-start-2 pl-1">111.asm</span>
                    </div>
                </aside>

                <!-- graphics area -->
                <section class="relative flex flex-1 justify-center pr-1.5">
                    <svg class="absolute inset-0 h-full w-full" viewBox="591 248 1441 1133">
                        <defs>
                            <linearGradient id="side"><stop offset="0" stop-color="#555a62" /><stop offset=".12" stop-color="#4a4f53" /><stop offset=".3" stop-color="#585d66" /><stop offset=".52" stop-color="#555a62" /><stop offset=".72" stop-color="#4a5053" /><stop offset=".88" stop-color="#484c50" /><stop offset="1" stop-color="#33373a" /></linearGradient>
                            <linearGradient id="boss"><stop offset="0" stop-color="#464b50" /><stop offset=".14" stop-color="#4a5053" /><stop offset=".3" stop-color="#585d66" /><stop offset=".48" stop-color="#585d66" /><stop offset=".66" stop-color="#4a5053" /><stop offset=".85" stop-color="#45494d" /><stop offset="1" stop-color="#36393d" /></linearGradient>
                        </defs>
                        <path fill="url(#side)" d="M879 897L884 925 889 957Q892 975 901 994 914 1023 946 1047 975 1070 1012 1086 1037 1096 1065 1103 1094 1111 1125 1115 1160 1120 1191 1121 1218 1122 1244 1120 1295 1118 1344 1111 1389 1102 1430 1089 1475 1076 1516 1058 1554 1040 1589 1018 1618 1000 1642 980L1660 960 1688 923Q1699 907 1706 887L1711 853 1708 827 1704 797 1700 770 1698 758Z" />
                        <path fill="#959fa8" d="M877 867L880 843 887 823 902 793 920 770 946 742 990 707 1033 682 1073 661 1137 638 1183 624Q1195 614 1211 608 1226 602 1244 599 1261 594 1279 594 1296 594 1311 596L1329 602 1364 601 1417 601Q1447 603 1476 607 1511 614 1543 624L1587 640 1613 653 1645 673 1672 700 1688 727 1698 758 1700 773 1699 793 1695 817 1678 853 1657 883 1623 915 1590 942Q1570 956 1543 971 1495 995 1443 1012 1401 1026 1357 1034 1311 1044 1264 1049 1227 1052 1191 1051 1151 1050 1112 1045 1071 1039 1032 1029 1001 1018 972 1003 951 992 933 978 917 965 906 950 898 940 892 929L885 918 879 897Z" />
                        <path fill="url(#boss)" d="M1161 675Q1163 681 1165 685 1170 690 1177 695 1188 701 1203 703 1221 707 1240 707 1257 707 1273 705 1287 702 1300 697 1317 691 1333 682 1345 675 1355 665 1361 659 1363 652L1364 640 1390 823Q1389 828 1385 833 1379 841 1370 848 1360 856 1347 862 1335 868 1320 873 1306 878 1290 880 1270 883 1250 881 1231 880 1213 873 1201 867 1193 858 1189 853 1188 847Z" />

                        <!-- datum planes -->
                        <g fill="none" stroke="#7f8387" stroke-width="1.300">
                            <path d="M850 651L1672 640 1711 895 888 906ZM877 827L1697 814" />
                            <path d="M1336 417L1185 873 1223 1130 1376 671Z" />
                            <path d="M1279 593L1241 708 1270 883 1307 763ZM1279 597L1243 706" />
                            <path d="M1363 598L1211 1050M1307 763L1268 880" />
                            <path d="M1157 651L1363 647 1390 826 1185 828Z" />
                            <path d="M1278 784l4 6 3-8M1282 790v8M1240 824l5 8M1245 824l-5 8M1290 855l5 14M1251 893l5 8" />
                        </g>
                        <g fill="none" stroke="#9a652f" stroke-width="1.500">
                            <path d="M965 672L1787 661 1634 1119 812 1129Z" />
                            <path d="M1205 770L1411 767 1373 882 1166 884Z" />
                            <path d="M1259 637L1274 735" stroke-dasharray="12 6 5 6" />
                            <path d="M1280 773L1288 823 1300 897 1306 933M1243 827L1333 825M1253 895H1345M1298 807L1280 850M1310 868L1291 920" />
                        </g>
                        <path d="M1247 774h33" stroke="#f33" stroke-width="2" />
                        <path d="M1276 745l4 28" stroke="#2f3" stroke-width="2" />
                        <path d="M1286 755l-5 17" stroke="#3ff" stroke-width="2" />
                        <circle cx="1247" cy="773" r="4" fill="#f33" /><circle cx="1276" cy="745" r="4.500" fill="#2f3" /><circle cx="1286" cy="755" r="3" fill="#3ff" />
                        <g fill="#9a652f" font-family="Liberation Mono" font-size="20">
                            <text x="1302" y="814">PRT_CSYS_DEF</text>
                            <text x="1314" y="884">ASM_DEF_CSYS</text>
                            <text x="1314" y="884">PRT_CSYS_DEF</text>
                        </g>
                    </svg>

                    <div class="z-10 mt-[11px] flex h-[42px] border-2 border-[#cdd1d5] bg-white" role="toolbar">
                        <i class="w-1.5 bg-[#eeeff1]"></i>
                        <button class="grid w-[41px] place-items-center border-l-2 border-[#cdd1d5]" aria-label="重新调整"><svg class="h-6 w-6" viewBox="0 0 24 24"><path d="M1 2h20v19H1z" fill="#fff" stroke="#1d4fb0" stroke-width="2" /><path d="M1 3h20" stroke="#1d4fb0" stroke-width="3" /><circle cx="12" cy="11" r="6" fill="#fff" stroke="#666" stroke-width="2" /><path d="M16 16l7 7" stroke="#8a4a20" stroke-width="3" /></svg></button>
                        <button class="grid w-[41px] place-items-center border-l-2 border-[#cdd1d5]" aria-label="放大"><svg class="h-6 w-6" viewBox="0 0 24 24"><circle cx="9" cy="9" r="8" fill="#fff" stroke="#777" stroke-width="2" /><path d="M5 9h8M9 5v8" stroke="#222" stroke-width="3" /><path d="M15 15l8 8" stroke="#8a4a20" stroke-width="3" /></svg></button>
                        <button class="grid w-[41px] place-items-center border-l-2 border-[#cdd1d5]" aria-label="缩小"><svg class="h-6 w-6" viewBox="0 0 24 24"><circle cx="9" cy="9" r="8" fill="#fff" stroke="#777" stroke-width="2" /><path d="M5 9h8" stroke="#222" stroke-width="3" /><path d="M15 15l8 8" stroke="#8a4a20" stroke-width="3" /></svg></button>
                        <button class="grid w-[41px] place-items-center border-l-2 border-[#cdd1d5]" aria-label="重画"><svg class="h-6 w-6" viewBox="0 0 24 24"><path d="M2 2h20v21H2z" fill="#e4f0fc" stroke="#1d4fa0" stroke-width="2" /><path d="M21 10v12H10z" fill="#8ab0e0" /><path d="M9 21c4-1 6-4 8-9" fill="none" stroke="#1a2c90" stroke-width="2" /><path d="M6 6c6 0 10 2 12 6M5 10l9 5M10 5l7 4" stroke="#6a94d0" fill="none" stroke-dasharray="1 2" /></svg></button>
                        <button class="relative grid w-[41px] place-items-center border-l-2 border-[#cdd1d5]" aria-label="显示样式"><svg class="h-6 w-6" viewBox="0 0 24 24"><path d="M2 8h15v14H2z" fill="#fff" stroke="#777" stroke-width="1.500" /><path d="M2 8l5-5h15l-5 5z" fill="#aff" stroke="#777" /><path d="M17 8l5-5v13l-5 6z" fill="#0a9a9a" stroke="#577" /></svg><svg class="absolute right-1 bottom-1 h-1.5 w-1.5" viewBox="0 0 6 6"><path d="M6 0v6H0z" fill="#666" /></svg></button>
                        <button class="relative grid w-[41px] place-items-center border-l-2 border-[#cdd1d5]" aria-label="已保存方向"><svg class="h-7 w-7" viewBox="0 0 28 28"><path d="M12 7H9l-4 4v13h14v-4" fill="none" stroke="#777" stroke-width="1.500" /><path d="M9 7h4v4H6z" fill="#aff" /><path d="M19 15h5v4l-5 5z" fill="#0aa" /><text x="12" y="12" font-family="Noto Sans" font-size="12" font-weight="600" fill="#222">AB</text></svg><svg class="absolute right-1 bottom-1 h-1.5 w-1.5" viewBox="0 0 6 6"><path d="M6 0v6H0z" fill="#666" /></svg></button>
                        <button class="grid w-[41px] place-items-center border-l-2 border-[#cdd1d5]" aria-label="视图管理器"><svg class="h-6 w-6" viewBox="0 0 24 24"><path d="M1 1h18v22H1z" fill="#fff" stroke="#555" stroke-dasharray="8 2" stroke-width="1.500" /><path d="M4 5h2M4 10h2M4 15h2M8 5h8" stroke="#555" stroke-width="1.500" /><svg x="8" y="9" width="16" height="15"><use href="#camera" /></svg></svg></button>
                        <button class="relative grid w-[41px] place-items-center border-l-2 border-[#cdd1d5]" aria-label="基准显示过滤器"><svg class="h-6 w-6" viewBox="0 0 24 24"><path d="M0 1l7 7M7 1L0 8M12 13l11 10M22 11l-8 13" stroke="#9a5220" stroke-width="2" /><path d="M16 0l-4 7M9 11L3 24" stroke="#9a5220" stroke-width="3" stroke-dasharray="5 3" /></svg><svg class="absolute right-1 bottom-1 h-1.5 w-1.5" viewBox="0 0 6 6"><path d="M6 0v6H0z" fill="#666" /></svg></button>
                        <button class="grid w-[41px] place-items-center border-l-2 border-[#cdd1d5]" aria-label="注释显示"><span class="grid h-9 w-9 place-items-center border border-t-4 border-[#aaa] bg-[#e6e7ea]"><svg class="h-7 w-7" viewBox="0 0 26 26"><path d="M0 1h12v6H0z" fill="#ffffa0" stroke="#8a8a20" stroke-width="1.500" /><path d="M13 4h7l-6 8 5-3" fill="none" stroke="#222" stroke-width="1.500" /><path d="M11 20c3-5 10-5 13 0-3 5-10 5-13 0z" fill="#eee" stroke="#555" stroke-width="1.500" /><path d="M12 15l12 0M13 12h6" stroke="#555" stroke-width="1.500" /><circle cx="17.500" cy="20" r="3" fill="#3a6a9a" /></svg></span></button>
                        <button class="grid w-[41px] place-items-center border-l-2 border-[#cdd1d5]" aria-label="旋转中心"><span class="grid h-9 w-9 place-items-center border border-t-4 border-[#aaa] bg-[#e6e7ea]"><svg class="h-6 w-6" viewBox="0 0 24 24"><path d="M4 4l6 8h10M10 12l-6 8" fill="none" stroke="#444" stroke-width="1.500" /><circle cx="4" cy="4" r="3.500" fill="#0b0" stroke="#161" /><circle cx="4" cy="20" r="3.500" fill="#2cc" stroke="#166" /><circle cx="20" cy="12" r="3.500" fill="#e11" stroke="#611" /></svg></span></button>
                        <i class="w-1.5 border-l-2 border-[#cdd1d5] bg-[#eeeff1]"></i>
                    </div>
                </section>
            </main>

            <!-- status bar -->
            <footer class="relative flex h-14 items-center border-t-3 border-[#999] bg-[#eeeff1] pr-7 pl-2.5">
                <button class="mt-1.5 grid h-[34px] w-[34px] place-items-center border border-t-3 border-[#aaa] bg-[#e4e5e8] text-[#1d3f90]" aria-label="模型树"><svg class="h-6 w-5"><use href="#tree" /></svg></button>
                <button class="mt-1.5 ml-[5px] grid h-[34px] w-[34px] place-items-center border-2 border-[#cdd1d5] bg-[#f8f8f8]" aria-label="浏览器"><svg class="h-7 w-7" viewBox="0 0 28 28"><circle cx="14" cy="13" r="10.500" fill="#2a8ad8" stroke="#147a50" stroke-width="1.500" /><path d="M6 6c5-4 10-3 12-2l-5 6-6 3zM17 12l6-3c1 6-1 9-5 12l-3-4z" fill="#4cd06a" stroke="#1a9a4a" /><path d="M3 26C1 18 14 3 26 2M3 26c6-1 5-5 9-9C18 9 22 8 26 8V2" fill="none" stroke="#e0a010" stroke-width="2.500" /></svg></button>
                <i class="mt-1.5 ml-3 h-[34px] w-0.5 bg-[#dfe0e2]"></i>
                <div class="ml-auto flex items-center">
                    <i class="h-11 w-0.5 bg-[#d8dadc]"></i>
                    <i class="ml-[52px] h-11 w-0.5 bg-[#d8dadc]"></i>
                    <div class="ml-1 flex items-center gap-0.5"><i class="h-4 w-4 rounded-full bg-[#4cd34c]"></i><i class="h-2 w-2 rounded-full bg-[#ccc]"></i><i class="h-2 w-2 rounded-full bg-[#ccc]"></i></div>
                    <i class="ml-1.5 h-11 w-0.5 bg-[#d8dadc]"></i>
                    <button class="ml-1 grid h-[42px] w-[60px] place-items-center rounded border-2 border-[#c6c9cc] bg-linear-to-b from-white to-[#eee]" aria-label="查找"><svg class="h-6 w-6"><use href="#binoculars" /></svg></button>
                    <i class="ml-[3px] h-11 w-0.5 bg-[#d8dadc]"></i>
                    <button class="ml-1 grid h-[42px] w-[60px] place-items-center rounded border-2 border-[#c6c9cc] bg-linear-to-b from-white to-[#eee]" aria-label="几何选择"><svg class="h-6 w-7" viewBox="0 0 28 24"><path d="M2 8h18v14H2zM2 8l6-6h18l-6 6M26 2v13l-6 7" fill="#fff" stroke="#333" stroke-width="1.500" /><path d="M5 12h5v8H5z" fill="#ff0" /><path d="M5 17h8v3H5z" fill="#ff0" /><path d="M8 12h5v5H8z" fill="#0ee" /></svg></button>
                    <select class="ml-36 h-[30px] w-[249px] appearance-none border-2 border-[#cdd1d5] bg-[#f8f8f8] pl-1.5 leading-6" aria-label="过滤器">
                        <option>智能</option>
                    </select>
                </div>
                <!-- forum watermark -->
                <a href="#" class="absolute right-4 bottom-0 w-[166px] font-['Noto_Sans_CJK_SC'] font-light italic">
                    <svg class="absolute -top-4 left-[61px] h-11 w-5" viewBox="0 0 20 44"><path d="M8 0c13 14 16 30 0 44-4-3-6-6-6-9C11 25 14 13 8 0z" fill="#f63" /><path d="M3 8c6 9 6 19-2 30C7 28 7 17 3 8z" fill="#f63" /></svg>
                    <span class="flex justify-between text-[40px] leading-10 text-black"><span class="text-[#f63]">野火</span><span>论坛</span></span>
                    <span class="block font-['Liberation_Sans'] text-lg leading-4 text-[#888]">www.proewildfire.cn</span>
                </a>
            </footer>
        </div>
    </div>
    <div class="ml-[72px] h-[3px] w-[516px] bg-[#bbb]"></div>
</body>

</html>
